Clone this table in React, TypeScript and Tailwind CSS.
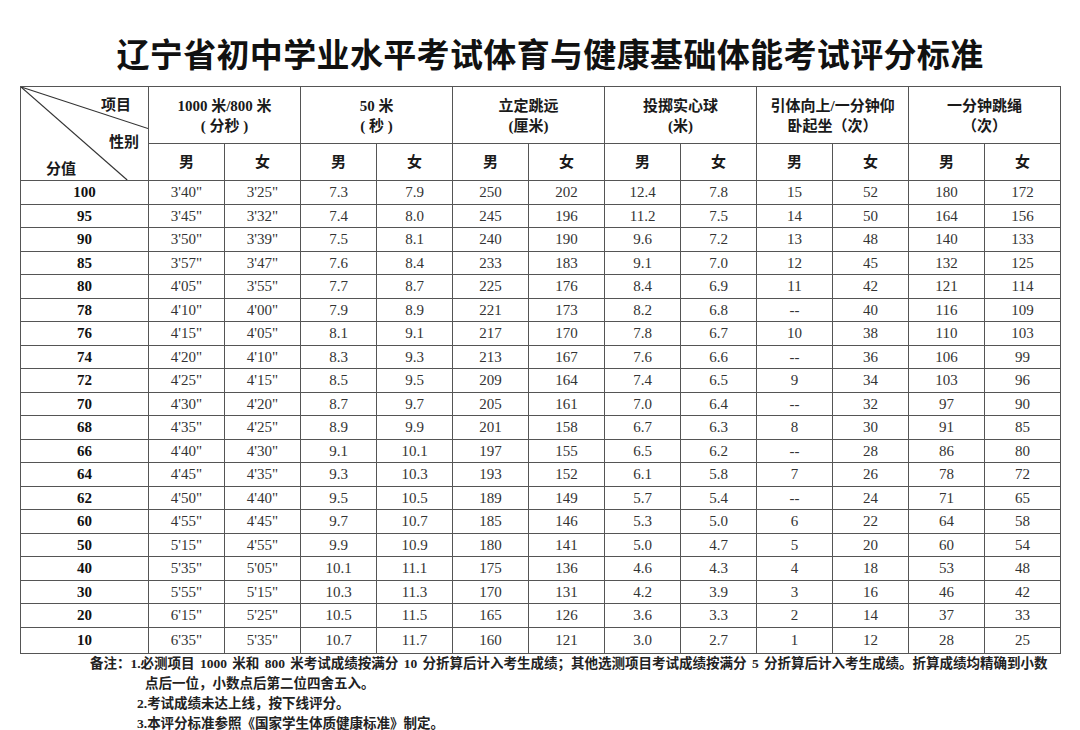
import React from "react";

const rows: [string, string[]][] = [
  ["100", ["3'40\"", "3'25\"", "7.3", "7.9", "250", "202", "12.4", "7.8", "15", "52", "180", "172"]],
  ["95", ["3'45\"", "3'32\"", "7.4", "8.0", "245", "196", "11.2", "7.5", "14", "50", "164", "156"]],
  ["90", ["3'50\"", "3'39\"", "7.5", "8.1", "240", "190", "9.6", "7.2", "13", "48", "140", "133"]],
  ["85", ["3'57\"", "3'47\"", "7.6", "8.4", "233", "183", "9.1", "7.0", "12", "45", "132", "125"]],
  ["80", ["4'05\"", "3'55\"", "7.7", "8.7", "225", "176", "8.4", "6.9", "11", "42", "121", "114"]],
  ["78", ["4'10\"", "4'00\"", "7.9", "8.9", "221", "173", "8.2", "6.8", "--", "40", "116", "109"]],
  ["76", ["4'15\"", "4'05\"", "8.1", "9.1", "217", "170", "7.8", "6.7", "10", "38", "110", "103"]],
  ["74", ["4'20\"", "4'10\"", "8.3", "9.3", "213", "167", "7.6", "6.6", "--", "36", "106", "99"]],
  ["72", ["4'25\"", "4'15\"", "8.5", "9.5", "209", "164", "7.4", "6.5", "9", "34", "103", "96"]],
  ["70", ["4'30\"", "4'20\"", "8.7", "9.7", "205", "161", "7.0", "6.4", "--", "32", "97", "90"]],
  ["68", ["4'35\"", "4'25\"", "8.9", "9.9", "201", "158", "6.7", "6.3", "8", "30", "91", "85"]],
  ["66", ["4'40\"", "4'30\"", "9.1", "10.1", "197", "155", "6.5", "6.2", "--", "28", "86", "80"]],
  ["64", ["4'45\"", "4'35\"", "9.3", "10.3", "193", "152", "6.1", "5.8", "7", "26", "78", "72"]],
  ["62", ["4'50\"", "4'40\"", "9.5", "10.5", "189", "149", "5.7", "5.4", "--", "24", "71", "65"]],
  ["60", ["4'55\"", "4'45\"", "9.7", "10.7", "185", "146", "5.3", "5.0", "6", "22", "64", "58"]],
  ["50", ["5'15\"", "4'55\"", "9.9", "10.9", "180", "141", "5.0", "4.7", "5", "20", "60", "54"]],
  ["40", ["5'35\"", "5'05\"", "10.1", "11.1", "175", "136", "4.6", "4.3", "4", "18", "53", "48"]],
  ["30", ["5'55\"", "5'15\"", "10.3", "11.3", "170", "131", "4.2", "3.9", "3", "16", "46", "42"]],
  ["20", ["6'15\"", "5'25\"", "10.5", "11.5", "165", "126", "3.6", "3.3", "2", "14", "37", "33"]],
  ["10", ["6'35\"", "5'35\"", "10.7", "11.7", "160", "121", "3.0", "2.7", "1", "12", "28", "25"]],
];

const groups: [string, string][] = [
  ["1000 米/800 米", "( 分秒 )"],
  ["50 米", "( 秒 )"],
  ["立定跳远", "(厘米)"],
  ["投掷实心球", "(米)"],
  ["引体向上/一分钟仰", "卧起坐（次）"],
  ["一分钟跳绳", "（次）"],
];

const font = { fontFamily: '"Liberation Serif", "Noto Sans CJK SC", serif' };

export default function App() {
  return (
    <div className="w-[1080px] h-[730px] bg-white text-[#1a1a1a] overflow-hidden" style={font}>
      <div className="h-[86px] pt-[37px] pl-[20px] text-center">
        <div
          className="text-[33px] leading-[33px] font-bold tracking-[0.35px] text-[#111]"
          style={{ fontFamily: '"Noto Sans CJK SC", sans-serif' }}
        >
          辽宁省初中学业水平考试体育与健康基础体能考试评分标准
        </div>
      </div>
      <table className="ml-[20px] w-[1040px] table-fixed border-collapse">
        <colgroup>
          <col className="w-[128px]" />
          {Array.from({ length: 12 }).map((_, i) => (
            <col key={i} className="w-[76px]" />
          ))}
        </colgroup>
        <thead>
          <tr className="h-[57px]">
            <td rowSpan={2} className="relative border border-[#555] p-0">
              <svg className="absolute inset-0 w-full h-full" viewBox="0 0 128 94" preserveAspectRatio="none">
                <line x1="0" y1="0" x2="128" y2="42" stroke="#333" strokeWidth="1.2" />
                <line x1="0" y1="0" x2="107" y2="94" stroke="#333" strokeWidth="1.2" />
              </svg>
              <span className="absolute left-[80px] top-[8px] text-[15px] leading-[20px] font-bold">项目</span>
              <span className="absolute left-[88px] top-[45px] text-[15px] leading-[20px] font-bold">性别</span>
              <span className="absolute left-[25px] top-[72px] text-[15px] leading-[20px] font-bold">分值</span>
            </td>
            {groups.map(([a, b], i) => (
              <td key={i} colSpan={2} className="border border-[#555] p-0 text-center align-middle">
                <div className="text-[15px] leading-[20px] font-bold pt-[2px]">{a}</div>
                <div className="text-[15px] leading-[20px] font-bold">{b}</div>
              </td>
            ))}
          </tr>
          <tr className="h-[37px]">
            {Array.from({ length: 12 }).map((_, i) => (
              <td key={i} className="border border-[#555] p-0 text-center align-middle text-[15px] font-bold">
                {i % 2 === 0 ? "男" : "女"}
              </td>
            ))}
          </tr>
        </thead>
        <tbody>
          {rows.map(([score, vals], r) => (
            <tr key={score} className={r === rows.length - 1 ? "h-[26px]" : "h-[23.5px]"}>
              <td className="border border-[#555] p-0 text-center align-middle text-[15px] leading-[18px] font-bold text-[#111]">
                {score}
              </td>
              {vals.map((v, i) => (
                <td key={i} className="border border-[#555] p-0 text-center align-middle text-[15px] leading-[18px] text-[#333]">
                  {v}
                </td>
              ))}
            </tr>
          ))}
        </tbody>
      </table>
      <div className="text-[13.5px] leading-[20px] font-bold text-[#222] whitespace-nowrap">
        <div className="pl-[90px] [word-spacing:2px]">
          备注：1.必测项目 1000 米和 800 米考试成绩按满分 10 分折算后计入考生成绩；其他选测项目考试成绩按满分 5 分折算后计入考生成绩。折算成绩均精确到小数
        </div>
        <div className="pl-[145px]">点后一位，小数点后第二位四舍五入。</div>
        <div className="pl-[137px]">2.考试成绩未达上线，按下线评分。</div>
        <div className="pl-[137px]">3.本评分标准参照《国家学生体质健康标准》制定。</div>
      </div>
    </div>
  );
}
